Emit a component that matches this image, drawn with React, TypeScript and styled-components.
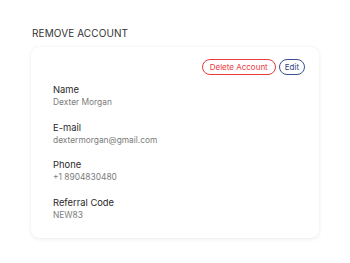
import React from "react";
import styled, { createGlobalStyle } from "styled-components";

const Global = createGlobalStyle`
  html, body { margin: 0; padding: 0; background: #ffffff; }
  body { font-family: Inter, "Noto Sans", sans-serif; -webkit-font-smoothing: antialiased; }
`;

const Page = styled.div`
  width: 350px;
  height: 263px;
  box-sizing: border-box;
  padding: 27px 31px 0 31px;
  display: flex;
  flex-direction: column;
`;

const Title = styled.h2`
  margin: 0 0 8px 1px;
  font-size: 10px;
  line-height: 12px;
  font-weight: 400;
  color: #333333;
  letter-spacing: 0.1px;
`;

const Card = styled.section`
  background: #fff;
  border-radius: 8px;
  box-shadow: 0 1px 4px rgba(0, 0, 0, 0.08), 0 0 1px rgba(0, 0, 0, 0.06);
  padding: 12px 14px 17px 22px;
  display: flex;
  flex-direction: column;
`;

const Actions = styled.div`
  display: flex;
  justify-content: flex-end;
  gap: 3px;
  margin-bottom: 9px;
`;

const Pill = styled.button<{ $tone: "danger" | "primary" }>`
  height: 16px;
  box-sizing: border-box;
  padding: 0 ${(p) => (p.$tone === "danger" ? "7px" : "5px")};
  border-radius: 8px;
  background: #fff;
  font-family: Inter, sans-serif;
  font-size: 8px;
  line-height: 14px;
  cursor: pointer;
  border: 1px solid ${(p) => (p.$tone === "danger" ? "#ea3a3d" : "#3b4f8f")};
  color: ${(p) => (p.$tone === "danger" ? "#e8393c" : "#2f427e")};
`;

const Fields = styled.dl`
  margin: 0;
  display: flex;
  flex-direction: column;
  gap: 13.5px;
`;

const Field = styled.div`
  display: flex;
  flex-direction: column;
`;

const Label = styled.dt`
  font-size: 9.4px;
  line-height: 12px;
  color: #2a2a2a;
`;

const Value = styled.dd`
  margin: 1px 0 0 0;
  font-size: 8.4px;
  line-height: 11px;
  color: #7c7c7c;
`;

const data = [
  { label: "Name", value: "Dexter Morgan" },
  { label: "E-mail", value: "dextermorgan@gmail.com" },
  { label: "Phone", value: "+1 8904830480" },
  { label: "Referral Code", value: "NEW83" },
];

export default function App() {
  return (
    <>
      <Global />
      <Page>
        <Title>REMOVE ACCOUNT</Title>
        <Card>
          <Actions>
            <Pill $tone="danger">Delete Account</Pill>
            <Pill $tone="primary">Edit</Pill>
          </Actions>
          <Fields>
            {data.map((d) => (
              <Field key={d.label}>
                <Label>{d.label}</Label>
                <Value>{d.value}</Value>
              </Field>
            ))}
          </Fields>
        </Card>
      </Page>
    </>
  );
}
